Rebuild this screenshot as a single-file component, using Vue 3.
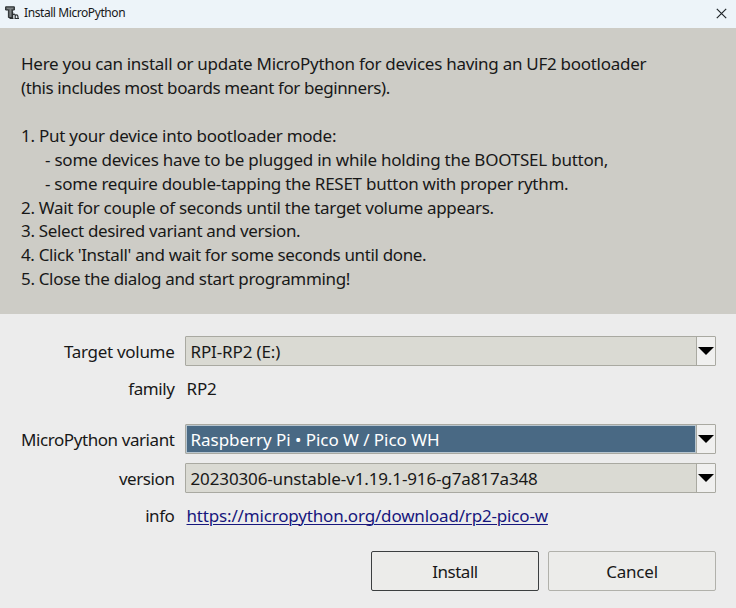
<script setup>
const lines = [
  { text: 'Here you can install or update MicroPython for devices having an UF2 bootloader', cls: 'l1' },
  { text: '(this includes most boards meant for beginners).', cls: 'l2' },
  { text: '', cls: 'blank' },
  { text: '1. Put your device into bootloader mode:', cls: 'l3' },
  { text: '- some devices have to be plugged in while holding the BOOTSEL button,', cls: 'sub l4' },
  { text: '- some require double-tapping the RESET button with proper rythm.', cls: 'sub l5' },
  { text: '2. Wait for couple of seconds until the target volume appears.', cls: 'l6' },
  { text: '3. Select desired variant and version.', cls: 'l7' },
  { text: "4. Click 'Install' and wait for some seconds until done.", cls: 'l8' },
  { text: '5. Close the dialog and start programming!', cls: 'l9' },
]
const rows = [
  { label: 'Target volume', value: 'RPI-RP2 (E:)', kind: 'combo', cls: 'target' },
  { label: 'family', value: 'RP2', kind: 'text', cls: 'family' },
  { label: 'MicroPython variant', value: 'Raspberry Pi • Pico W / Pico WH', kind: 'combo', cls: 'variant' },
  { label: 'version', value: '20230306-unstable-v1.19.1-916-g7a817a348', kind: 'combo', cls: 'version' },
  { label: 'info', value: 'https://micropython.org/download/rp2-pico-w', kind: 'link', cls: 'info' },
]
</script>

<template>
  <div class="window">
    <header class="titlebar">
      <svg class="logo" width="15" height="14" viewBox="0 0 15 14">
        <path d="M.6 .8H9.400V4H7.400V11.500H3.400V4H.6Z" fill="#5c6062" stroke="#2b2f31" stroke-width="1" />
        <path d="M2 2.300H8M5.300 3V11" stroke="#9a9e9f" stroke-width=".7" />
        <path d="M7.600 12.500V6M7.800 8.800Q10 7.300 10.200 9.500V12.500M10.500 9.200Q13.300 7.800 13 12.500M4.500 12.500H8.500M9.500 12.500H14" fill="none" stroke="#2b2f31" stroke-width="1.200" />
      </svg>
      <span class="title">Install MicroPython</span>
      <svg class="close" width="11" height="11" viewBox="0 0 11 11">
        <path d="M.8 .8L10.200 10.200M10.200 .8L.8 10.200" stroke="#20262a" stroke-width="1.200" />
      </svg>
    </header>
    <section class="intro">
      <p v-for="(l, i) in lines" :key="i" :class="l.cls"><span>{{ l.text }}</span></p>
    </section>
    <main class="form">
      <div v-for="r in rows" :key="r.cls" class="row" :class="r.cls">
        <label><span>{{ r.label }}</span></label>
        <div v-if="r.kind === 'combo'" class="combo">
          <div class="field"><span>{{ r.value }}</span></div>
          <div class="arrow">
            <svg width="16" height="8" viewBox="0 0 16 8"><path d="M0 0H16L8 8Z" fill="#000" /></svg>
          </div>
        </div>
        <a v-else-if="r.kind === 'link'" class="plain link">{{ r.value }}</a>
        <span v-else class="plain">{{ r.value }}</span>
      </div>
    </main>
    <footer class="actions">
      <button class="primary">Install</button>
      <button>Cancel</button>
    </footer>
  </div>
</template>

<style>
body { margin: 0; background: #ececec; }
</style>

<style scoped>
.window {
  width: 736px; height: 608px; overflow: hidden; box-sizing: border-box;
  display: flex; flex-direction: column; background: #ececec; color: #181818;
  font-family: "Noto Sans", "Open Sans", sans-serif; font-size: 17px;
}
.titlebar {
  height: 28px; flex: none; display: flex; align-items: center; background: #edf4f9;
  box-sizing: border-box; padding: 0 9px 2px 5px;
}
.title { margin-left: 4px; font-size: 12px; line-height: 18px; letter-spacing: -.42px; }
.close { margin-left: auto; }
.intro { height: 286px; flex: none; box-sizing: border-box; padding: 24.400px 20px 0 21px; background: #cdccc6; }
.intro p { margin: 0; height: 23.860px; line-height: 24px; white-space: pre; }
.intro .sub { padding-left: 24px; }
.l1 { letter-spacing: -.278px; }
.l2 { letter-spacing: -.4px; }
.l3 { letter-spacing: -.25px; }
.l4 { letter-spacing: -.23px; }
.l5 { letter-spacing: -.26px; }
.l6 { letter-spacing: -.3px; }
.l7 { letter-spacing: -.34px; }
.l8 { letter-spacing: -.35px; }
.l9 { letter-spacing: -.33px; }
.form { display: flex; flex-direction: column; padding-top: 22px; }
.row { display: flex; align-items: center; height: 30px; white-space: nowrap; }
.row label { width: 174.500px; margin-right: 10.500px; text-align: right; letter-spacing: -.42px; }
.target label { letter-spacing: -.3px; }
.family { margin-top: 7px; }
.variant { margin-top: 21px; }
.version { margin-top: 9px; }
.info { margin-top: 7px; }
.combo { width: 531px; height: 30px; box-sizing: border-box; display: flex; border: 1px solid #a9a9a1; border-radius: 1px; }
.field { flex: 1; display: flex; align-items: center; padding-left: 4.500px; background: #dadad3; letter-spacing: -.13px; }
.arrow { width: 18px; border-left: 1px solid #a9a9a1; background: #f0f0ef; display: flex; align-items: center; justify-content: center; }
.variant .field { background: #496984; color: #fff; border: 1px solid #b7c5cf; padding-left: 3.500px; letter-spacing: -.04px; }
.plain { margin-left: 1.500px; letter-spacing: -.17px; }
.link { color: #17177d; text-decoration: underline; text-decoration-thickness: 1px; text-underline-offset: 2px; }
.actions { display: flex; gap: 9px; padding: 21px 20px 0 371px; }
button {
  width: 168px; height: 40px; flex: none; box-sizing: border-box; padding: 1px 0 0; border: 1px solid #b1b1ab;
  border-radius: 2px; background: #ececea; color: #181818; font: inherit; letter-spacing: -.2px;
}
.primary { border-color: #3c3f40; letter-spacing: -.5px; }
</style>
